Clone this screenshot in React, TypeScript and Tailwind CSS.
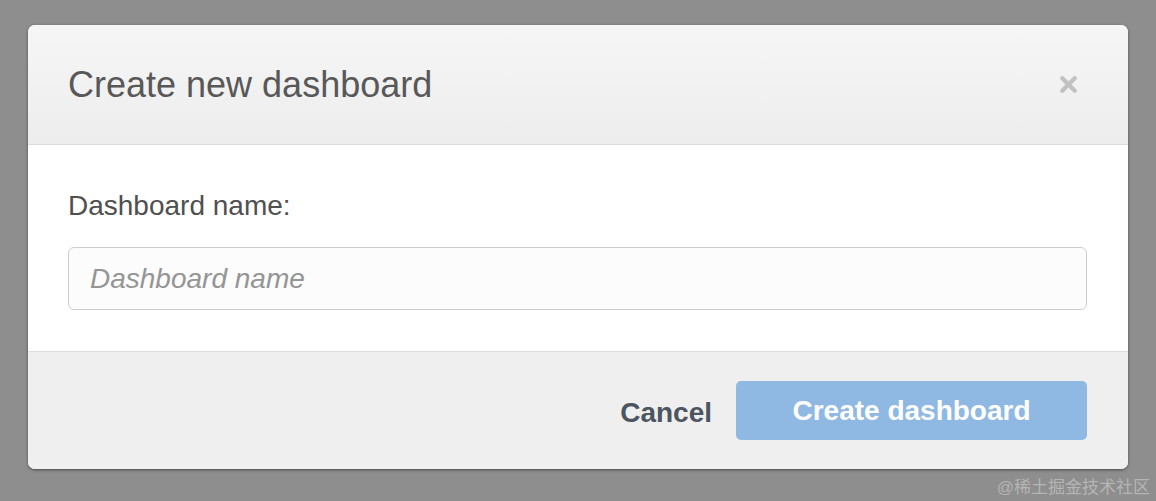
import { X } from "lucide-react";

export default function App() {
  return (
    <div className="relative h-[501px] w-[1156px] overflow-hidden bg-[#8e8e8e] font-['Liberation_Sans',Arial,sans-serif]">
      <div className="pl-[28px] pt-[25px]">
        {/* Modal */}
        <div className="w-[1100px] overflow-hidden rounded-[7px] bg-white shadow-[0_1px_3px_rgba(0,0,0,0.5)]">
          {/* Header */}
          <div className="flex h-[120px] items-center justify-between border-b border-[#dcdcdc] bg-gradient-to-b from-[#f6f6f6] to-[#ededed] pl-[40px] pr-[47px]">
            <h1 className="mt-[1px] text-[36px] leading-none text-[#585858]">Create new dashboard</h1>
            <X className="h-[25px] w-[25px] text-[#c2c2c2]" strokeWidth={4.2} />
          </div>

          {/* Body */}
          <div className="px-[40px] pt-[47px] pb-[41px]">
            <label className="block text-[28px] leading-none text-[#505050]">Dashboard name:</label>
            <input
              type="text"
              placeholder="Dashboard name"
              className="mt-[27px] block h-[63px] w-[1019px] rounded-[6px] border border-[#cdcdcd] bg-[#fcfcfc] px-[21px] text-[28px] italic text-[#555] placeholder:text-[#959595] outline-none"
            />
          </div>

          {/* Footer */}
          <div className="flex h-[118px] items-start justify-end gap-[24px] border-t border-[#dedede] bg-[#efefef] pr-[41px] pt-[29px]">
            <button className="mt-[18px] text-[28px] font-bold leading-none text-[#4c5560]">Cancel</button>
            <button className="h-[59px] w-[351px] rounded-[5px] bg-[#8fb9e3] text-[28px] font-bold text-white">
              Create dashboard
            </button>
          </div>
        </div>
      </div>

      {/* Watermark */}
      <div className="absolute bottom-[5px] right-[6px] text-[17px] leading-none text-[#b5b5b5] font-['Liberation_Sans','Noto_Sans_CJK_SC',sans-serif]">
        @稀土掘金技术社区
      </div>
    </div>
  );
}
